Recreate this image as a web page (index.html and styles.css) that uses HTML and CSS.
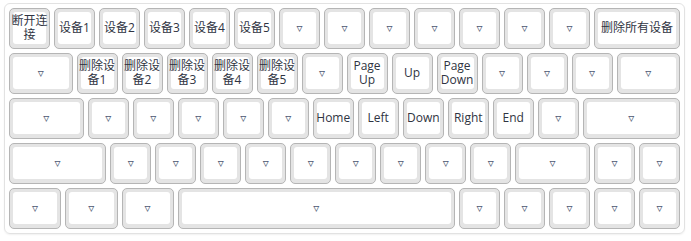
FILE: index.html
```html
<!doctype html>
<html>
	<head>
	    <meta charset="utf-8"/>
	    <title>Keyboard</title>
		<link rel="stylesheet" href="styles.css">
	</head>
	<body>

	   <div id="board">
	       <div class="row">
	           <div class="key"><div class="face"><span class="label">断开连接</span></div></div>
	           <div class="key"><div class="face"><span class="label">设备1</span></div></div>
	           <div class="key"><div class="face"><span class="label">设备2</span></div></div>
	           <div class="key"><div class="face"><span class="label">设备3</span></div></div>
	           <div class="key"><div class="face"><span class="label">设备4</span></div></div>
	           <div class="key"><div class="face"><span class="label">设备5</span></div></div>
	           <div class="key"><div class="face"><span class="label tri">▿</span></div></div>
	           <div class="key"><div class="face"><span class="label tri">▿</span></div></div>
	           <div class="key"><div class="face"><span class="label tri">▿</span></div></div>
	           <div class="key"><div class="face"><span class="label tri">▿</span></div></div>
	           <div class="key"><div class="face"><span class="label tri">▿</span></div></div>
	           <div class="key"><div class="face"><span class="label tri">▿</span></div></div>
	           <div class="key"><div class="face"><span class="label tri">▿</span></div></div>
	           <div class="key u2"><div class="face"><span class="label">删除所有设备</span></div></div>
	       </div>

	       <div class="row">
	           <div class="key u15"><div class="face"><span class="label tri">▿</span></div></div>
	           <div class="key"><div class="face"><span class="label">删除设备1</span></div></div>
	           <div class="key"><div class="face"><span class="label">删除设备2</span></div></div>
	           <div class="key"><div class="face"><span class="label">删除设备3</span></div></div>
	           <div class="key"><div class="face"><span class="label">删除设备4</span></div></div>
	           <div class="key"><div class="face"><span class="label">删除设备5</span></div></div>
	           <div class="key"><div class="face"><span class="label tri">▿</span></div></div>
	           <div class="key"><div class="face"><span class="label">Page Up</span></div></div>
	           <div class="key"><div class="face"><span class="label">Up</span></div></div>
	           <div class="key"><div class="face"><span class="label">Page Down</span></div></div>
	           <div class="key"><div class="face"><span class="label tri">▿</span></div></div>
	           <div class="key"><div class="face"><span class="label tri">▿</span></div></div>
	           <div class="key"><div class="face"><span class="label tri">▿</span></div></div>
	           <div class="key u15"><div class="face"><span class="label tri">▿</span></div></div>
	       </div>

	       <div class="row">
	           <div class="key u175"><div class="face"><span class="label tri">▿</span></div></div>
	           <div class="key"><div class="face"><span class="label tri">▿</span></div></div>
	           <div class="key"><div class="face"><span class="label tri">▿</span></div></div>
	           <div class="key"><div class="face"><span class="label tri">▿</span></div></div>
	           <div class="key"><div class="face"><span class="label tri">▿</span></div></div>
	           <div class="key"><div class="face"><span class="label tri">▿</span></div></div>
	           <div class="key"><div class="face"><span class="label">Home</span></div></div>
	           <div class="key"><div class="face"><span class="label">Left</span></div></div>
	           <div class="key"><div class="face"><span class="label">Down</span></div></div>
	           <div class="key"><div class="face"><span class="label">Right</span></div></div>
	           <div class="key"><div class="face"><span class="label">End</span></div></div>
	           <div class="key"><div class="face"><span class="label tri">▿</span></div></div>
	           <div class="key u225"><div class="face"><span class="label tri">▿</span></div></div>
	       </div>

	       <div class="row">
	           <div class="key u225"><div class="face"><span class="label tri">▿</span></div></div>
	           <div class="key"><div class="face"><span class="label tri">▿</span></div></div>
	           <div class="key"><div class="face"><span class="label tri">▿</span></div></div>
	           <div class="key"><div class="face"><span class="label tri">▿</span></div></div>
	           <div class="key"><div class="face"><span class="label tri">▿</span></div></div>
	           <div class="key"><div class="face"><span class="label tri">▿</span></div></div>
	           <div class="key"><div class="face"><span class="label tri">▿</span></div></div>
	           <div class="key"><div class="face"><span class="label tri">▿</span></div></div>
	           <div class="key"><div class="face"><span class="label tri">▿</span></div></div>
	           <div class="key"><div class="face"><span class="label tri">▿</span></div></div>
	           <div class="key u175"><div class="face"><span class="label tri">▿</span></div></div>
	           <div class="key"><div class="face"><span class="label tri">▿</span></div></div>
	           <div class="key"><div class="face"><span class="label tri">▿</span></div></div>
	       </div>

	       <div class="row">
	           <div class="key u125"><div class="face"><span class="label tri">▿</span></div></div>
	           <div class="key u125"><div class="face"><span class="label tri">▿</span></div></div>
	           <div class="key u125"><div class="face"><span class="label tri">▿</span></div></div>
	           <div class="key u625"><div class="face"><span class="label tri">▿</span></div></div>
	           <div class="key"><div class="face"><span class="label tri">▿</span></div></div>
	           <div class="key"><div class="face"><span class="label tri">▿</span></div></div>
	           <div class="key"><div class="face"><span class="label tri">▿</span></div></div>
	           <div class="key"><div class="face"><span class="label tri">▿</span></div></div>
	           <div class="key"><div class="face"><span class="label tri">▿</span></div></div>
	       </div>
	   </div>

	</body>
</html>
```

FILE: styles.css
```css
		    body{
		        margin: 0;
		        padding: 3px 4px;
		        font-family: "Open Sans", "Noto Sans CJK SC", sans-serif;
		        font-size: 12px;
		        color: #2f3442;
		        background: #fff;
		    }

		    #board{
		        width: 671px;
		        padding: 4px;
		        border: 1px solid #e2e2e2;
		        border-radius: 6px;
		        box-shadow: 0 1px 2px rgba(0,0,0,0.06);
		        display: flex;
		        flex-direction: column;
		        gap: 4px;
		    }
		    .row{
		        display: flex;
		        gap: 4px;
		    }

		    .key{
		        box-sizing: border-box;
		        width: 41px;
		        height: 41px;
		        flex: none;
		        display: flex;
		        padding: 3px 3px 4px 3px;
		        border: 1px solid #b5b5b5;
		        border-radius: 5px;
		        background: #e4e4e4;
		    }
		    .u125{ width: 52.25px; }
		    .u15{ width: 63.5px; }
		    .u175{ width: 74.75px; }
		    .u2{ width: 86px; }
		    .u225{ width: 97.25px; }
		    .u625{ width: 277.25px; }

		    .face{
		        flex: 1;
		        display: flex;
		        align-items: center;
		        justify-content: center;
		        background: #fff;
		        border-radius: 3px;
		        min-width: 0;
		    }
		    .label{
		        flex: none;
		        width: 39px;
		        text-align: center;
		        line-height: 14px;
		    }
		    .u2 .label{
		        width: 80px;
		    }
		    .tri{
		        font-family: "DejaVu Sans", sans-serif;
		        font-size: 12px;
		        color: #4a5670;
		    }
```
